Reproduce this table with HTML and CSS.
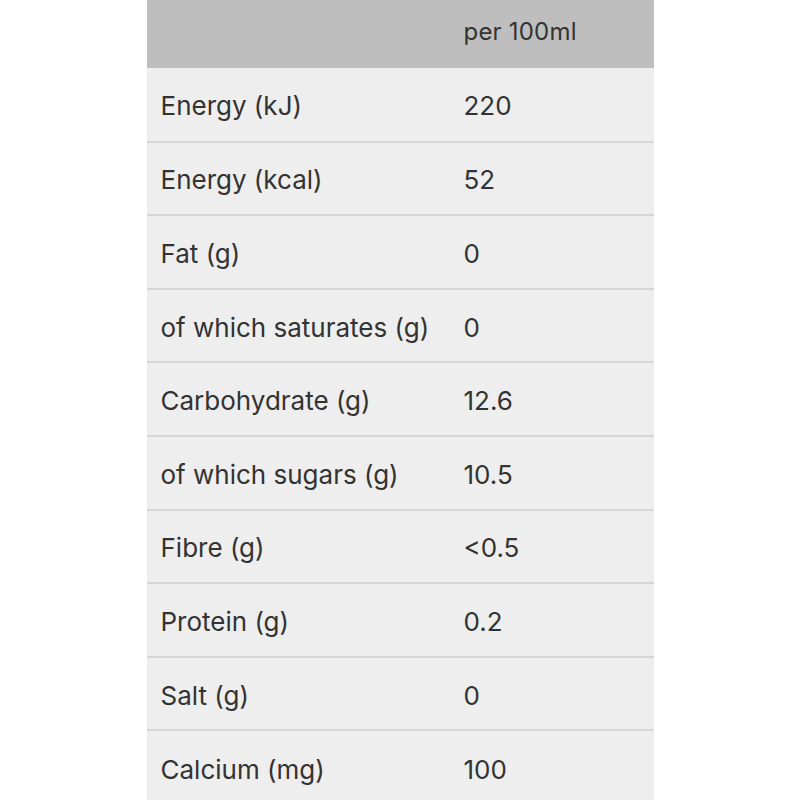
FILE: index.html
```html
<!DOCTYPE html>
<html>
<head>
<meta charset="utf-8">
<link rel="stylesheet" href="styles.css">
</head>
<body>
<table class="nutrition">
  <thead>
    <tr class="head-row"><th class="label-col"></th><th class="value-col">per 100ml</th></tr>
  </thead>
  <tbody>
    <tr><td>Energy (kJ)</td><td>220</td></tr>
    <tr><td>Energy (kcal)</td><td>52</td></tr>
    <tr><td>Fat (g)</td><td>0</td></tr>
    <tr><td>of which saturates (g)</td><td>0</td></tr>
    <tr><td>Carbohydrate (g)</td><td>12.6</td></tr>
    <tr><td>of which sugars (g)</td><td>10.5</td></tr>
    <tr><td>Fibre (g)</td><td>&lt;0.5</td></tr>
    <tr><td>Protein (g)</td><td>0.2</td></tr>
    <tr><td>Salt (g)</td><td>0</td></tr>
    <tr><td>Calcium (mg)</td><td>100</td></tr>
  </tbody>
</table>
</body>
</html>
```
FILE: styles.css
```css
html, body {
  margin: 0;
  padding: 0;
  background: #ffffff;
}
.nutrition {
  width: 507px;
  margin: 0 auto;
  border-collapse: collapse;
  table-layout: fixed;
  font-family: Inter, "Noto Sans", sans-serif;
  color: #333333;
}
.label-col {
  width: 275px;
}
.head-row {
  background: #bebebe;
  height: 68px;
}
.head-row th {
  font-weight: 400;
  font-size: 24px;
  text-align: left;
  padding: 0 14px 5px;
  vertical-align: middle;
  letter-spacing: 0.2px;
}
.nutrition tbody tr {
  background: #eeeeee;
  height: 73.6px;
  border-top: 2px solid #d6d6d6;
}
.nutrition tbody tr:first-child {
  border-top: none;
}
.nutrition td {
  font-size: 26px;
  padding: 3px 14px 0;
  vertical-align: middle;
  white-space: nowrap;
}
```
